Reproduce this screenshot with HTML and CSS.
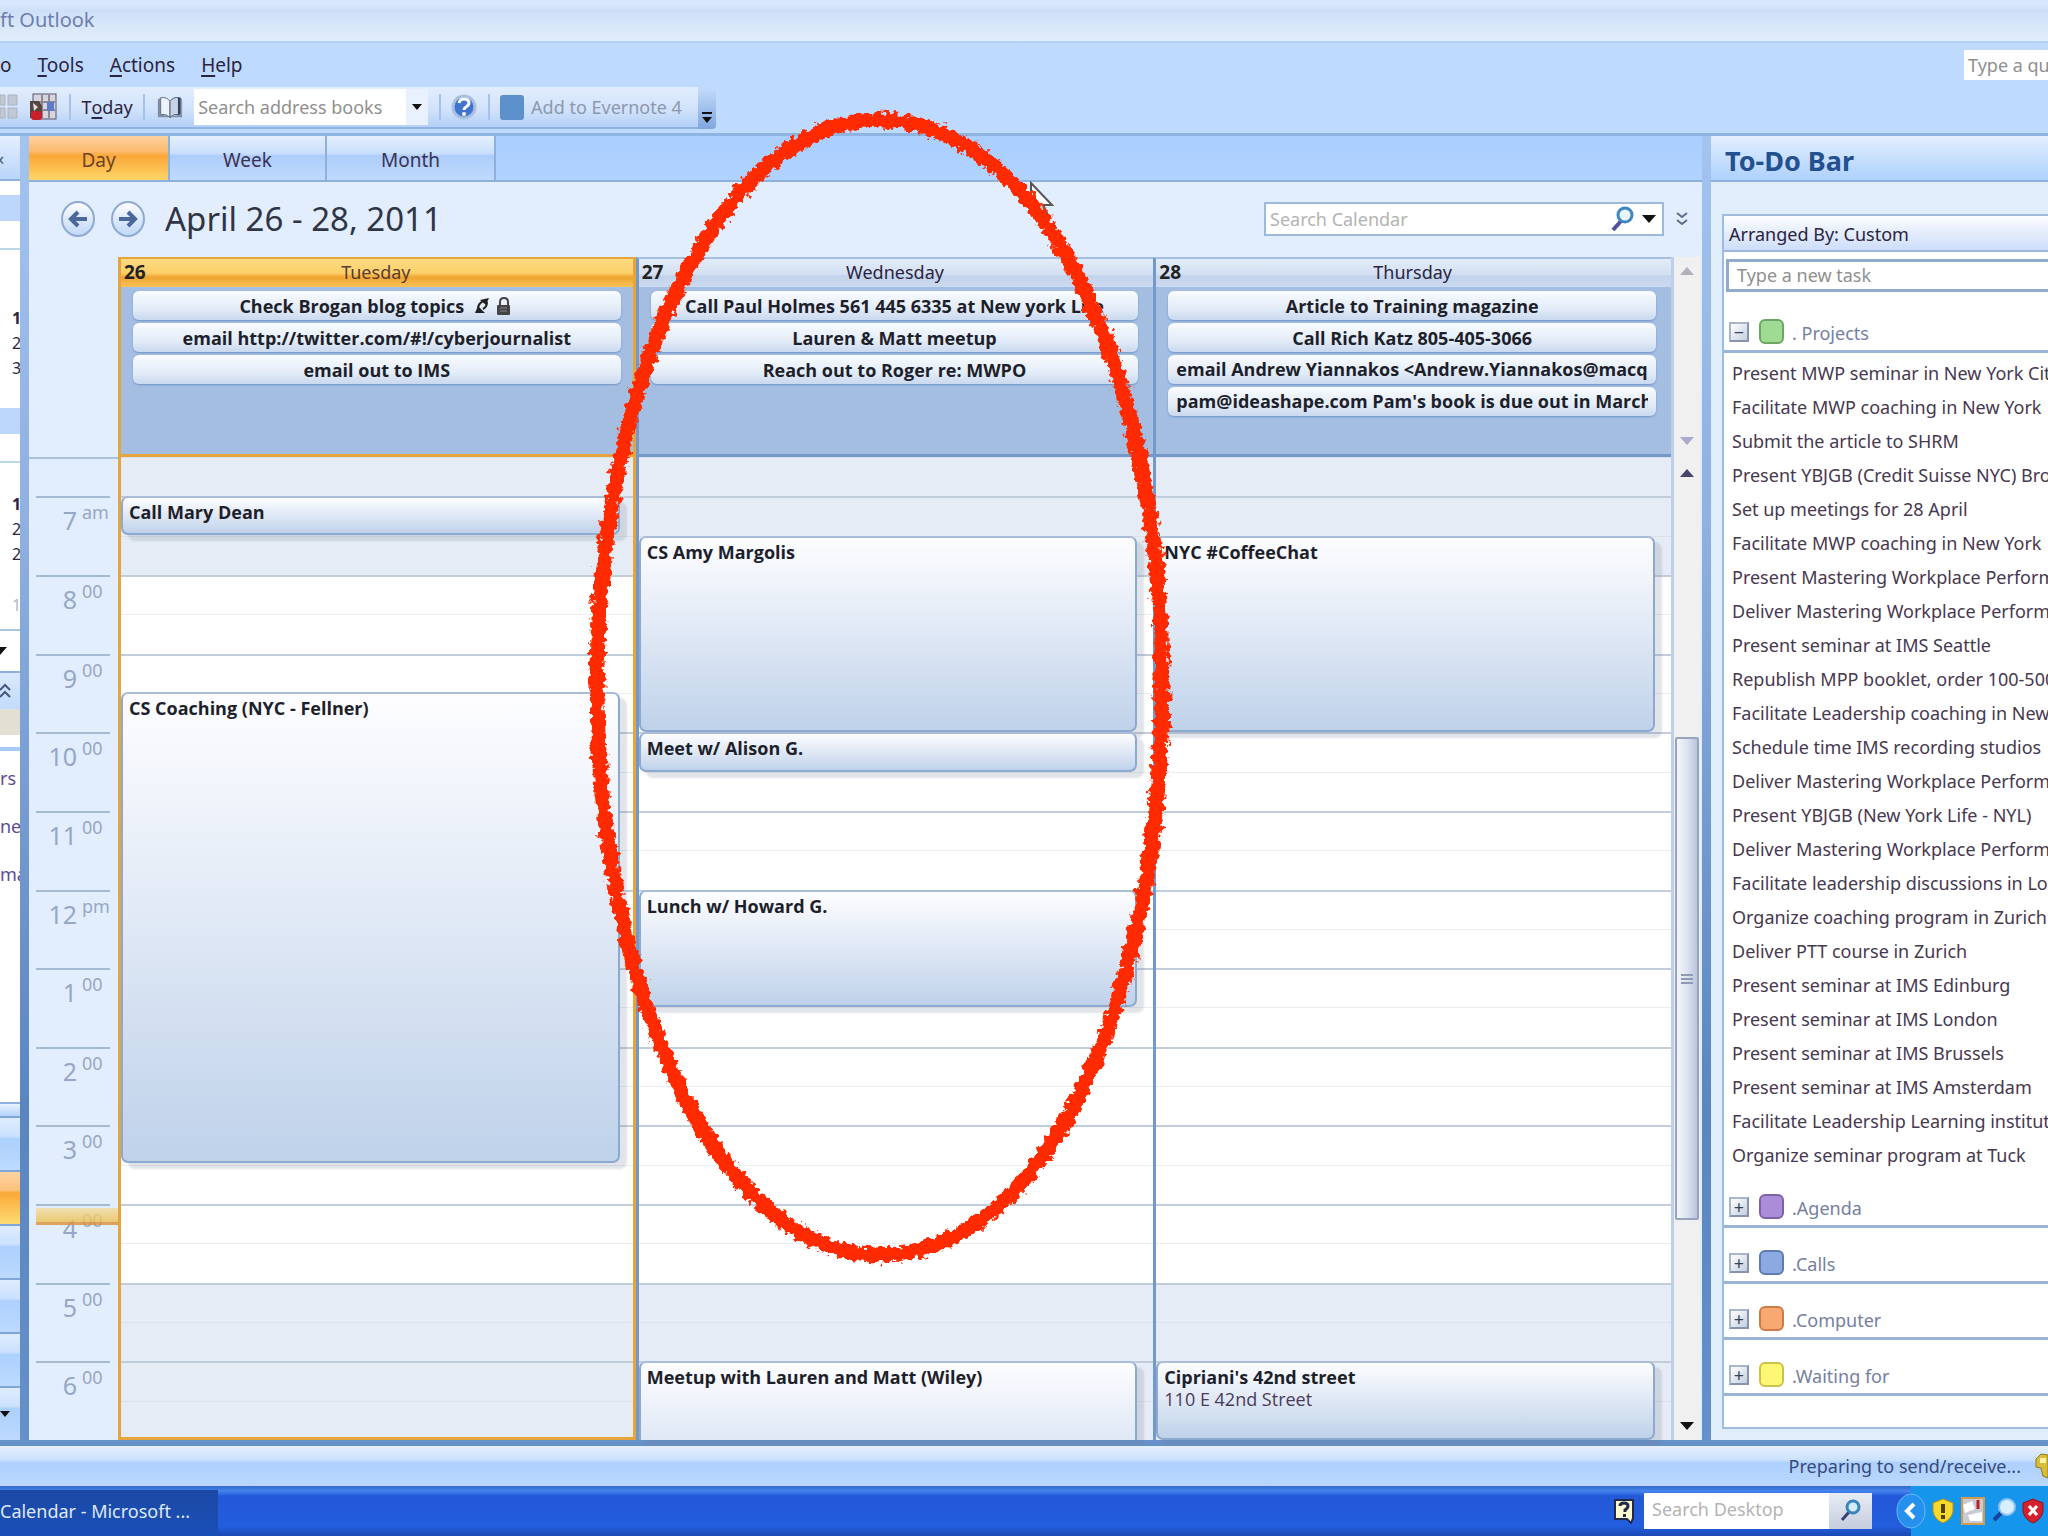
FILE: index.html
```
<!DOCTYPE html>
<html lang="en">
<head>
 <meta charset="UTF-8">
 <meta name="viewport" content="width=device-width, initial-scale=1">
 <title>Calendar - Microsoft Outlook</title>
 <link rel="stylesheet" href="styles.css">
</head>
<body>
 <header class="title-bar">ft Outlook</header>

 <nav class="menu-bar">
  <a href="#">o</a>
  <a href="#"><u>T</u>ools</a>
  <a href="#"><u>A</u>ctions</a>
  <a href="#"><u>H</u>elp</a>
  <input class="question-box" type="text" placeholder="Type a question for help" aria-label="Type a question">
 </nav>

 <div class="toolbar-row">
  <div class="toolbar">
   <button class="tool" aria-label="View">
    <svg width="18" height="30" viewBox="0 0 18 30"><path d="M0 3h5v10H0zM8 3h9v10H8zM0 16h5v10H0zM8 16h9v10H8z" fill="#c3c9d3" stroke="#a9b2c0"/></svg>
   </button>
   <button class="tool" aria-label="Address book">
    <svg width="30" height="30" viewBox="0 0 30 30"><rect x="5" y="2" width="23" height="25" fill="#d9d5dc" stroke="#55556e"/><path d="M14 3v23M21 3v23M6 10h21M6 18h21" stroke="#8d8898" stroke-width="2"/><rect x="19" y="10" width="7" height="9" fill="#5c7cc8"/><path d="M2 9h9l3 5v12H2z" fill="#55443f"/><path d="M5 11l5 4-4 4z" fill="#ddd"/><rect x="3" y="19" width="11" height="9" rx="3" fill="#c8202a"/></svg>
   </button>
   <span class="separator"></span>
   <button class="tool">T<u>o</u>day</button>
   <span class="separator"></span>
   <button class="tool" aria-label="Open address book">
    <svg width="28" height="28" viewBox="0 0 30 28"><path d="M2 6l3-2v18l9 2 2 2 2-2 9-2V4l1 2v19H2z" fill="#7d8da3"/><path d="M5 4q7-1 10 4v17q-4-4-10-3z" fill="#eef3fa" stroke="#5d6b80"/><path d="M15 8q3-5 10-4v18q-6-1-10 3z" fill="#c7d4e6" stroke="#46546b"/><path d="M25 4v18" stroke="#34425c" stroke-width="3"/></svg>
   </button>
   <div class="combo">
    <input type="text" placeholder="Search address books" aria-label="Search address books">
    <button aria-label="Show list"><span class="arrow-down small"></span></button>
   </div>
   <span class="separator"></span>
   <button class="tool" aria-label="Help">
    <svg width="26" height="28" viewBox="0 0 26 26"><circle cx="13" cy="13" r="11" fill="#3f74cf" stroke="#a9bfdf" stroke-width="3"/><path d="M8 9q1-4 5-4 5 0 5 4 0 2-3 4-2 1-2 3" fill="none" stroke="#fff" stroke-width="3"/><circle cx="13" cy="20" r="2" fill="#fff"/></svg>
   </button>
   <span class="separator"></span>
   <button class="tool evernote"><span class="evernote-icon"></span>Add to Evernote 4</button>
  </div>
  <button class="toolbar-more" aria-label="Toolbar options"><span class="more-bar"></span><span class="arrow-down small"></span></button>
 </div>

 <main class="workspace">
  <aside class="nav-pane">
   <div class="nav-head">«</div>
   <div class="mini-month">
    <div class="month-band"></div>
    <div class="month-days"><b>1</b><span>2</span><span>3</span></div>
   </div>
   <div class="mini-month second">
    <div class="month-band"></div>
    <div class="month-days"><b>1</b><span>2</span><span>2</span><i>1</i></div>
   </div>
   <div class="nav-drop"><span class="arrow-down"></span></div>
   <div class="nav-section">
    <svg width="12" height="16" viewBox="0 0 12 16"><path d="M0 7l5-5 5 5M0 14l5-5 5 5" fill="none" stroke="#44597f" stroke-width="2"/></svg>
   </div>
   <div class="nav-selected"></div>
   <div class="nav-links">
    <a href="#">rs</a>
    <a href="#">ne</a>
    <a href="#">ma</a>
   </div>
   <div class="nav-grip"></div>
   <button class="nav-button" aria-label="Mail"></button>
   <button class="nav-button active" aria-label="Calendar"></button>
   <button class="nav-button" aria-label="Contacts"></button>
   <button class="nav-button" aria-label="Tasks"></button>
   <button class="nav-button" aria-label="Notes"></button>
   <button class="nav-button" aria-label="Configure buttons"><span class="arrow-down small"></span></button>
  </aside>

  <section class="calendar">
   <div class="tabs">
    <button class="tab tab-day active">Day</button>
    <button class="tab tab-week">Week</button>
    <button class="tab tab-month">Month</button>
   </div>

   <div class="date-bar">
    <button class="round" aria-label="Back"><svg width="34" height="36" viewBox="0 0 34 36"><ellipse cx="17" cy="18" rx="16" ry="17" fill="url(#orb)" stroke="#8eaad2" stroke-width="2"/><path d="M26 18H10M17 11l-7 7 7 7" fill="none" stroke="#4a689c" stroke-width="4"/></svg></button>
    <button class="round" aria-label="Forward"><svg width="34" height="36" viewBox="0 0 34 36"><defs><linearGradient id="orb" x2="0" y2="1"><stop offset="0" stop-color="#fff"/><stop offset=".5" stop-color="#dce9fb"/><stop offset="1" stop-color="#c0d8f8"/></linearGradient></defs><ellipse cx="17" cy="18" rx="16" ry="17" fill="url(#orb)" stroke="#8eaad2" stroke-width="2"/><path d="M8 18h16M17 11l7 7-7 7" fill="none" stroke="#4a689c" stroke-width="4"/></svg></button>
    <h1>April 26 - 28, 2011</h1>
    <div class="search">
     <input type="text" placeholder="Search Calendar" aria-label="Search Calendar">
     <button aria-label="Search"><svg width="24" height="26" viewBox="0 0 24 26"><path d="M2 24l8-9" stroke="#51509c" stroke-width="4"/><circle cx="14" cy="9" r="7" fill="#e8f5fd" stroke="#3f86c0" stroke-width="3"/></svg></button>
     <button aria-label="Search options"><span class="arrow-down"></span></button>
    </div>
    <button class="expand" aria-label="Expand"><svg width="12" height="16" viewBox="0 0 12 16"><path d="M1 2l5 4 5-4M1 9l5 4 5-4" fill="none" stroke="#5d6f8c" stroke-width="2"/></svg></button>
   </div>

   <div class="week">
    <div class="day-head today first"><b>26</b><span>Tuesday</span></div>
    <div class="day-head"><b>27</b><span>Wednesday</span></div>
    <div class="day-head"><b>28</b><span>Thursday</span></div>

    <div class="all-day today first">
     <div class="pill">Check Brogan blog topics
      <svg width="42" height="20" viewBox="0 0 42 20"><path d="M3 17l3-7 7 7zM17 2l-3 7-6-5z" fill="#222"/><path d="M6 13q0-6 6-8M15 6q0 5-4 7" fill="none" stroke="#222" stroke-width="2"/><rect x="25" y="9" width="13" height="10" rx="1" fill="#444"/><path d="M28 9V6q0-4 4-4t4 4v3" fill="none" stroke="#444" stroke-width="2"/><path d="M28 12h7M28 15h7" stroke="#888"/></svg>
     </div>
     <div class="pill">email http://twitter.com/#!/cyberjournalist</div>
     <div class="pill">email out to IMS</div>
    </div>
    <div class="all-day">
     <div class="pill">Call Paul Holmes 561 445 6335 at New york Life</div>
     <div class="pill">Lauren &amp; Matt meetup</div>
     <div class="pill">Reach out to Roger re: MWPO</div>
    </div>
    <div class="all-day">
     <div class="pill">Article to Training magazine</div>
     <div class="pill">Call Rich Katz 805-405-3066</div>
     <div class="pill long"><span>email Andrew Yiannakos &lt;Andrew.Yiannakos@macq</span></div>
     <div class="pill long"><span>pam@ideashape.com Pam's book is due out in March</span></div>
    </div>
    <div class="scroll scroll-top"><span class="arrow-up faded"></span><span class="arrow-down faded"></span></div>

    <div class="hours">
     <div class="hour">7<sup>am</sup></div>
     <div class="hour">8<sup>00</sup></div>
     <div class="hour">9<sup>00</sup></div>
     <div class="hour">10<sup>00</sup></div>
     <div class="hour">11<sup>00</sup></div>
     <div class="hour">12<sup>pm</sup></div>
     <div class="hour">1<sup>00</sup></div>
     <div class="hour">2<sup>00</sup></div>
     <div class="hour">3<sup>00</sup></div>
     <div class="hour now">4<sup>00</sup></div>
     <div class="hour">5<sup>00</sup></div>
     <div class="hour">6<sup>00</sup></div>
    </div>
    <div class="slots" id="slots"></div>
    <div class="day today first">
     <div class="event at-700 half">Call Mary Dean</div>
     <div class="event at-930 six-hours">CS Coaching (NYC - Fellner)</div>
    </div>
    <div class="day">
     <div class="event at-730 long-block">CS Amy Margolis</div>
     <div class="event at-1000 half">Meet w/ Alison G.</div>
     <div class="event at-1200 hour-half">Lunch w/ Howard G.</div>
     <div class="event at-1800 cut">Meetup with Lauren and Matt (Wiley)</div>
    </div>
    <div class="day">
     <div class="event at-730 long-block">NYC #CoffeeChat</div>
     <div class="event at-1800 one-hour">Cipriani's 42nd street<span>110 E 42nd Street</span></div>
    </div>
    <div class="scroll scroll-main">
     <span class="arrow-up"></span>
     <div class="track"><div class="thumb"><i></i><i></i><i></i></div></div>
     <span class="arrow-down"></span>
    </div>
   </div>
  </section>

  <aside class="todo">
   <h2>To-Do Bar</h2>
   <div class="todo-box">
    <div class="arranged">Arranged By: Custom</div>
    <input class="new-task" type="text" placeholder="Type a new task" aria-label="Type a new task">
    <div class="group first"><button class="toggle" aria-label="Collapse">−</button><span class="swatch green"></span>. Projects</div>
    <ul class="tasks">
     <li>Present MWP seminar in New York City</li>
     <li>Facilitate MWP coaching in New York</li>
     <li>Submit the article to SHRM</li>
     <li>Present YBJGB (Credit Suisse NYC) Brown</li>
     <li>Set up meetings for 28 April</li>
     <li>Facilitate MWP coaching in New York</li>
     <li>Present Mastering Workplace Performance</li>
     <li>Deliver Mastering Workplace Performance</li>
     <li>Present seminar at IMS Seattle</li>
     <li>Republish MPP booklet, order 100-500</li>
     <li>Facilitate Leadership coaching in New York</li>
     <li>Schedule time IMS recording studios</li>
     <li>Deliver Mastering Workplace Performance</li>
     <li>Present YBJGB (New York Life - NYL)</li>
     <li>Deliver Mastering Workplace Performance</li>
     <li>Facilitate leadership discussions in London</li>
     <li>Organize coaching program in Zurich</li>
     <li>Deliver PTT course in Zurich</li>
     <li>Present seminar at IMS Edinburg</li>
     <li>Present seminar at IMS London</li>
     <li>Present seminar at IMS Brussels</li>
     <li>Present seminar at IMS Amsterdam</li>
     <li>Facilitate Leadership Learning institute</li>
     <li>Organize seminar program at Tuck</li>
    </ul>
    <div class="group"><button class="toggle" aria-label="Expand">+</button><span class="swatch purple"></span>.Agenda</div>
    <div class="group"><button class="toggle" aria-label="Expand">+</button><span class="swatch blue"></span>.Calls</div>
    <div class="group"><button class="toggle" aria-label="Expand">+</button><span class="swatch orange"></span>.Computer</div>
    <div class="group"><button class="toggle" aria-label="Expand">+</button><span class="swatch yellow"></span>.Waiting for</div>
   </div>
  </aside>
 </main>

 <footer class="status-bar">
  <span>Preparing to send/receive...</span>
  <svg width="13" height="26" viewBox="0 0 13 26"><path d="M13 2L6 1 1 6v8l5 1 2 8 5 2z" fill="#d8bd3a" stroke="#8c7a1d"/><path d="M5 5h6v5H5z" fill="#fff3a8"/></svg>
 </footer>

 <div class="taskbar">
  <button class="task-button">Calendar - Microsoft ...</button>
  <svg width="20" height="26" viewBox="0 0 20 26"><path d="M1 2h18v18l-2 5-4-4H1z" fill="#fdfbd0" stroke="#222a4a" stroke-width="2"/><path d="M6 8q0-3 4-3t4 3q0 2-3 4v2" fill="none" stroke="#222a4a" stroke-width="3"/><rect x="9" y="16" width="3" height="3" fill="#222a4a"/></svg>
  <div class="desk-search">
   <input type="text" placeholder="Search Desktop" aria-label="Search Desktop">
   <button aria-label="Search"><svg width="22" height="24" viewBox="0 0 22 24"><path d="M2 21l7-8" stroke="#37406f" stroke-width="3"/><circle cx="13" cy="8" r="6" fill="#d5ebfa" stroke="#3a84bd" stroke-width="3"/></svg></button>
  </div>
  <div class="tray">
   <svg width="30" height="38" viewBox="0 0 30 38"><ellipse cx="15" cy="19" rx="14" ry="17" fill="#2590ee" stroke="#6bb9f6"/><path d="M18 12l-7 7 7 7" fill="none" stroke="#fff" stroke-width="4"/></svg>
   <svg width="22" height="26" viewBox="0 0 22 26"><path d="M11 1l10 4v8q-1 8-10 12Q2 21 1 13V5z" fill="#f7d92c" stroke="#b78f10"/><path d="M11 6v9M11 17v4" stroke="#54430d" stroke-width="4"/></svg>
   <svg width="26" height="30" viewBox="0 0 26 30"><rect x="2" y="2" width="22" height="26" fill="#c8cbd3" stroke="#d59b4a" stroke-width="2"/><path d="M3 9l9-4 3 8-10 4zM8 19l14-3v9H10z" fill="#fff"/><path d="M18 4v9" stroke="#b22" stroke-width="3"/></svg>
   <svg width="24" height="28" viewBox="0 0 24 28"><path d="M2 23l8-8" stroke="#1b3f9d" stroke-width="4"/><circle cx="15" cy="10" r="8" fill="#d8efff" stroke="#8cc2ef" stroke-width="2"/></svg>
   <svg width="22" height="28" viewBox="0 0 22 28"><path d="M11 2l10 4v8q-1 8-10 12Q2 22 1 14V6z" fill="#d5202f" stroke="#8a1420"/><path d="M7 9l8 9M15 9l-8 9" stroke="#fff" stroke-width="3"/></svg>
  </div>
 </div>

 <svg class="cursor" width="28" height="42" viewBox="0 0 28 42"><path d="M2 2v30l6-6 6 13 6-3-6-12h9z" fill="#fff" stroke="#555" stroke-width="2"/></svg>

 <!-- Red marker ring around Wednesday -->
 <svg class="marker" width="620" height="1190" viewBox="0 0 620 1190">
  <filter id="rough" x="-5%" y="-5%" width="110%" height="110%">
   <feTurbulence type="fractalNoise" baseFrequency="0.16" numOctaves="3" seed="4"/>
   <feDisplacementMap in="SourceGraphic" scale="12" xChannelSelector="R" yChannelSelector="G"/>
  </filter>
  <path d="M304 25C460 25 587 260 587 592C587 905 470 1160 304 1160C148 1160 22 903 22 590C22 277 148 25 304 25Z" fill="none" stroke="#ff2a00" stroke-width="15" filter="url(#rough)"/>
 </svg>

 <script>
  // Half-hour rows from 6:30 am to 7 pm, working hours are 8 to 5
  const slots = document.getElementById('slots');
  for (let i = 0; i < 25; i++) {
   const time = 6.5 + i / 2;
   const slot = document.createElement('div');
   slot.className = 'slot';
   if (time >= 8 && time < 17) slot.classList.add('working');
   if (i % 2 === 1) slot.classList.add('on-hour');
   slots.appendChild(slot);
  }
 </script>
</body>
</html>
```
FILE: styles.css
```
:root {
 --line: #8fb0dc;
 --edge: #7398c9;
 --pale: #e2eefd;
 --bar: #bfdaff;
 --orange: #e5a53c;
}

* {
 box-sizing: border-box;
}

body {
 margin: 0;
 min-height: 100vh;
 display: flex;
 flex-direction: column;
 position: relative;
 overflow: hidden;
 background: var(--bar);
 color: #2b2440;
 font-family: "Noto Sans", "Open Sans", sans-serif;
 font-size: 18px;
 line-height: 24px;
}

button,
input {
 font: inherit;
 color: inherit;
 border: 0;
 padding: 0;
 background: none;
 border-radius: 0;
 min-width: 0;
}

input::placeholder {
 color: #8f8f8f;
 opacity: 1;
}

a {
 color: inherit;
 text-decoration: none;
}

u {
 text-decoration-thickness: 2px;
 text-underline-offset: 3px;
}

svg {
 display: block;
 flex: none;
}

.arrow-down,
.arrow-up {
 display: block;
 border: 7px solid transparent;
 border-top: 8px solid #111;
 border-bottom: 0;
}

.arrow-up {
 border-top: 0;
 border-bottom: 8px solid #44466e;
}

.small {
 width: 10px;
 border-width: 6px 5px 0;
}

.arrow-down.faded {
 border-top-color: #a9a9cc;
}

.arrow-up.faded {
 border-bottom-color: #b0b0bc;
}

/* Title, menu and toolbar */
.title-bar {
 height: 41px;
 line-height: 40px;
 font-size: 20px;
 color: #6d7fae;
 background: linear-gradient(#d8e7fc 0 6px, #cddff8 10px, #e3eefb);
}

.menu-bar {
 height: 46px;
 display: flex;
 align-items: center;
 gap: 26px;
 font-size: 19px;
 border-top: 2px solid #b4d0f5;
}

.question-box {
 width: 84px;
 height: 30px;
 margin-left: auto;
 padding-left: 4px;
 font-size: 18px;
 background: #fff;
}

.toolbar-row {
 display: flex;
 height: 46px;
 padding-bottom: 4px;
}

.toolbar {
 width: 698px;
 display: flex;
 align-items: center;
 justify-content: space-between;
 padding-right: 16px;
 background: linear-gradient(#e2edfd, #cfe1fb 60%, #b3d0f6);
 border-bottom: 2px solid #8fb2e2;
}

.tool {
 display: flex;
 align-items: center;
}

.separator {
 width: 2px;
 height: 26px;
 background: #a5c3ea;
}

.combo {
 display: flex;
 height: 36px;
 width: 234px;
}

.combo input {
 flex: 1;
 padding-left: 4px;
 background: #fff;
}

.combo button {
 width: 22px;
 display: grid;
 place-items: center;
 background: #e8f1fd;
}

.evernote {
 gap: 7px;
 color: #8c98ad;
}

.evernote-icon {
 width: 24px;
 height: 25px;
 border-radius: 3px;
 background: #5c90ca;
}

.toolbar-more {
 width: 18px;
 display: flex;
 flex-direction: column;
 align-items: center;
 justify-content: flex-end;
 gap: 3px;
 padding-bottom: 6px;
 background: linear-gradient(#c3dbfb, #7fa7df);
 border-radius: 0 4px 4px 0;
}

.more-bar {
 width: 10px;
 height: 2px;
 background: #111;
}

/* Main area */
.workspace {
 flex: 1;
 display: grid;
 grid-template-columns: 20px minmax(0, 1fr) 337px;
 column-gap: 9px;
 border-top: 3px solid #8fb4e2;
 border-bottom: 6px solid #6590c9;
 background: linear-gradient(#a3c4ef, #8fb0e0 30%, #5a85bf 75%, #6590c9);
}

.nav-pane {
 display: flex;
 flex-direction: column;
 overflow: hidden;
 background: #fff;
}

.nav-head {
 height: 45px;
 line-height: 44px;
 text-indent: -5px;
 color: #47597c;
 background: linear-gradient(#e4effe, #b9d5fb);
 border-bottom: 2px solid var(--line);
 margin-bottom: 14px;
}

.mini-month {
 height: 213px;
}

.mini-month.second {
 height: 223px;
 border-bottom: 2px solid #a9c6dc;
}

.month-band {
 height: 26px;
 background: #bdd7fb;
}

.month-days {
 margin-top: 27px;
 padding: 56px 0 0 12px;
 border-top: 2px solid #bcd8e8;
 display: flex;
 flex-direction: column;
 font-size: 16px;
 line-height: 25px;
}

.second .month-days {
 padding-top: 29px;
}

.month-days i {
 padding-top: 26px;
 font-style: normal;
 color: #b8b8b8;
}

.nav-drop {
 height: 40px;
 padding-top: 16px;
}

.nav-drop .arrow-down {
 width: 14px;
 margin-left: -7px;
}

.nav-section {
 height: 38px;
 padding-top: 10px;
 background: linear-gradient(#d9e9fe, #c2dbfb);
 border-top: 2px solid var(--line);
}

.nav-selected {
 height: 26px;
 margin-bottom: 12px;
 background: #e3dfd3;
}

.nav-links {
 flex: 1;
 display: flex;
 flex-direction: column;
 gap: 24px;
 padding-top: 15px;
 border-top: 4px solid #a6cbf8;
 color: #5b4c92;
}

.nav-grip {
 height: 14px;
 background: linear-gradient(#eaf3fe, #b4d2fa);
 border-top: 2px solid var(--line);
}

.nav-button {
 height: 54px;
 border-top: 2px solid #7fa6d8;
 background: linear-gradient(#dfecfe, #cbe1fe 35%, #add0fd 40%, #bddafe);
}

.nav-button.active {
 background: linear-gradient(#fdd3a2, #fcc07b 35%, #fba938 40%, #fedb72);
}

/* Calendar */
.calendar {
 display: flex;
 flex-direction: column;
 background: var(--pale);
}

.tabs {
 display: flex;
 height: 46px;
 background: linear-gradient(#aacffe, #b0d2ff);
 border-bottom: 2px solid var(--line);
}

.tab {
 padding-top: 4px;
 font-size: 19px;
 color: #3c3154;
 border-right: 2px solid var(--line);
 background: linear-gradient(#e4effd, #c9defc 40%, #adcdfa 45%, #c0dafd);
}

.tab.active {
 background: linear-gradient(#fdd1a0, #fdba6c 35%, #fba737 45%, #fed567);
 color: #6b4426;
}

.tab-day {
 width: 141px;
}

.tab-week {
 width: 157px;
}

.tab-month {
 width: 169px;
}

.date-bar {
 height: 75px;
 display: flex;
 align-items: center;
 padding: 0 14px 2px 32px;
}

.round {
 margin-right: 16px;
}

h1 {
 margin: 0 auto 0 4px;
 font-size: 33px;
 line-height: 40px;
 font-weight: 400;
 color: #303545;
}

.search {
 display: flex;
 width: 400px;
 height: 34px;
 background: #fff;
 border: 2px solid #9db9dc;
}

.search input {
 flex: 1;
 padding-left: 4px;
}

.search input::placeholder,
.desk-search input::placeholder {
 color: #b3b3b3;
}

.search button {
 width: 26px;
 display: grid;
 place-items: center;
}

.expand {
 margin-left: 12px;
}

.week {
 flex: 1;
 display: grid;
 grid-template-columns: 89px repeat(3, minmax(0, 1fr)) 31px;
 grid-template-rows: 30px 170px minmax(0, 1fr);
}

.first {
 grid-column: 2;
}

.day-head {
 display: flex;
 align-items: center;
 padding: 0 5px 2px 3px;
 border-top: 2px solid #a5bfe4;
 border-left: 3px solid var(--edge);
 background: linear-gradient(#e2ecf9, #d3e0f3 55%, #c3d3ec 60%, #cbdaf1);
}

.day-head b {
 width: 30px;
 font-size: 19px;
 color: #222;
}

.day-head span {
 flex: 1;
 padding-right: 30px;
 text-align: center;
}

.day-head.today {
 border: 3px solid var(--orange);
 border-top-width: 2px;
 border-bottom: 0;
 background: linear-gradient(#fddb82, #fbd069 50%, #f0a42f 65%, #f8c258);
 color: #5b3a33;
}

.all-day {
 display: flex;
 flex-direction: column;
 gap: 3px;
 padding: 4px 15px 0 12px;
 background: #a4bee2;
 border-left: 3px solid var(--edge);
 border-bottom: 3px solid var(--edge);
}

.all-day.today {
 border: 3px solid var(--orange);
 border-top: 0;
 padding-right: 12px;
}

.pill {
 height: 29px;
 display: flex;
 justify-content: center;
 align-items: center;
 gap: 8px;
 padding: 0 8px;
 white-space: nowrap;
 font-family: "Open Sans", sans-serif;
 font-weight: 700;
 color: #1d1f2b;
 border-radius: 6px;
 background: linear-gradient(#f9fbfe, #e3ecf8 60%, #cad9ef);
 box-shadow: 0 1px 2px #6f93c7;
}

.pill.long {
 display: block;
 line-height: 28px;
}

.pill.long span {
 display: block;
 overflow: hidden;
}

.slots,
.hours,
.day,
.scroll-main {
 grid-row: 3;
}

.slots {
 grid-column: 2 / 5;
 display: grid;
 grid-template-rows: repeat(25, minmax(0, 1fr));
}

.slot {
 background: #e6ecf6;
 border-top: 1px solid #dbe1ec;
}

.slot.working {
 background: #fff;
 border-top-color: #ebeeef;
}

.slot.on-hour {
 border-top: 2px solid #c2cddb;
}

.hours {
 grid-column: 1;
 display: grid;
 grid-template-rows: minmax(0, 1fr) repeat(12, minmax(0, 2fr));
 padding: 0 8px 0 7px;
 box-shadow: inset 0 2px #a9c3df;
}

/* Empty half hour before 7 am */
.hours::before {
 content: "";
}

.hour {
 position: relative;
 display: grid;
 grid-template-columns: 41px 1fr;
 column-gap: 5px;
 align-content: start;
 text-align: right;
 border-top: 2px solid #a5bad3;
 font-size: 25px;
 line-height: 44px;
 color: #96a7c6;
}

.hour sup {
 font-size: 18px;
 line-height: 28px;
 text-align: left;
}

/* Current time line over the hour label */
.now::before {
 content: "";
 position: absolute;
 top: 2px;
 left: 0;
 right: -8px;
 height: 14px;
 background: linear-gradient(#f3dca0, #edc14f);
 border-bottom: 3px solid #dd9035;
 opacity: .8;
}

.day {
 display: grid;
 grid-template-rows: repeat(25, minmax(0, 1fr));
 padding-right: 16px;
 border-left: 3px solid var(--edge);
}

.day.today {
 border: 3px solid var(--orange);
 border-top: 0;
 padding-right: 13px;
}

.day.first {
 grid-column: 2;
}

.day.first + .day {
 grid-column: 3;
}

.day.first + .day + .day {
 grid-column: 4;
}

.event {
 padding: 2px 6px;
 font-family: "Open Sans", sans-serif;
 font-weight: 700;
 color: #1d1f2b;
 border: 2px solid #8ca9d0;
 border-top-color: #a9bcd8;
 border-radius: 7px;
 background: linear-gradient(#fdfdff, #e2eaf6 45%, #bfd2ea);
 box-shadow: 7px 6px 2px rgba(120, 130, 150, .22);
}

.event span {
 display: block;
 line-height: 20px;
 font-weight: 400;
 color: #4a3a5c;
}

.at-700 { grid-row-start: 2; }
.at-730 { grid-row-start: 3; }
.at-930 { grid-row-start: 7; }
.at-1000 { grid-row-start: 8; }
.at-1200 { grid-row-start: 12; }
.at-1800 { grid-row-start: 24; }

.half { grid-row-end: span 1; }
.one-hour { grid-row-end: span 2; }
.hour-half { grid-row-end: span 3; }
.long-block { grid-row-end: span 5; }
.six-hours { grid-row-end: span 12; }

.cut {
 grid-row-end: span 2;
 border-bottom: 0;
 border-radius: 7px 7px 0 0;
 background: linear-gradient(#fdfdff, #dfe8f5);
}

.scroll {
 grid-column: 5;
 display: flex;
 flex-direction: column;
 align-items: center;
 justify-content: space-between;
 margin-right: 2px;
 border-left: 3px solid #bcd0ec;
 background: #f0f0f1;
}

.scroll-top {
 grid-row: 1 / 3;
 padding: 10px 0 12px;
}

.scroll-main {
 padding: 12px 0 10px;
}

.track {
 flex: 1;
 display: flex;
 flex-direction: column;
 padding: 260px 0 202px;
}

.thumb {
 flex: 1;
 width: 24px;
 display: flex;
 flex-direction: column;
 align-items: center;
 justify-content: center;
 gap: 2px;
 border: 2px solid #98a4bd;
 border-radius: 2px;
 background: linear-gradient(90deg, #f4f6fa, #dde3ee 50%, #b9c5dd);
}

.thumb i {
 width: 12px;
 height: 2px;
 background: #8f9bb5;
}

/* To-Do bar */
.todo {
 display: flex;
 flex-direction: column;
 overflow: hidden;
 background: #e0eefc;
 white-space: nowrap;
}

h2 {
 height: 46px;
 margin: 0 0 32px;
 padding-left: 14px;
 font-size: 27px;
 line-height: 50px;
 font-weight: 700;
 color: #23508f;
 background: linear-gradient(#e4effe, #aed1fe);
 border-bottom: 2px solid var(--line);
}

.todo-box {
 flex: 1;
 display: flex;
 flex-direction: column;
 margin: 0 0 11px 11px;
 background: #fff;
 border: 2px solid #9fbbe0;
 border-right: 0;
}

.arranged {
 height: 36px;
 padding-left: 5px;
 line-height: 36px;
 background: linear-gradient(#fcfdff, #cdddfa);
 border-bottom: 2px solid #9db7dc;
}

.new-task {
 height: 33px;
 margin: 7px 0 0 2px;
 padding: 0 0 2px 8px;
 border: 3px solid #90abcb;
 border-right: 0;
}

.group {
 height: 56px;
 display: flex;
 align-items: flex-end;
 padding: 0 0 5px 5px;
 border-bottom: 3px solid #98b5d8;
 color: #75809f;
}

.group.first {
 height: 61px;
}

.toggle {
 width: 20px;
 height: 20px;
 margin: 0 10px 3px 0;
 line-height: 12px;
 color: #34435f;
 border: 2px solid #a9b5c9;
 border-right-color: #8694ae;
 border-bottom-color: #8694ae;
 background: linear-gradient(135deg, #fff, #c5cfdd);
}

.swatch {
 width: 25px;
 height: 25px;
 margin: 0 8px 1px 0;
 border: 2px solid;
 border-radius: 6px;
}

.green { background: #9fdb92; border-color: #6da563; }
.purple { background: #ab8cd9; border-color: #7d62a8; }
.blue { background: #8ca9e2; border-color: #5f7bb2; }
.orange { background: #f8a871; border-color: #cd7b48; }
.yellow { background: #fcf873; border-color: #cbc14b; }

.tasks {
 margin: 0 0 0 8px;
 padding: 3px 0 0;
 list-style: none;
 line-height: 34px;
 color: #46384f;
}

/* Status bar and taskbar */
.status-bar {
 height: 40px;
 display: flex;
 align-items: center;
 justify-content: flex-end;
 gap: 14px;
 color: #364a7c;
 background: linear-gradient(#e6effd, #cbe1fd 35%, #aed0fe 42%, #bbd7fe);
}

.taskbar {
 height: 50px;
 display: flex;
 align-items: center;
 background: linear-gradient(#2f69c8, #4585ee 5px, #2358d8 10px, #235edf 80%, #1b49b4);
}

.task-button {
 width: 218px;
 height: 46px;
 margin: 4px auto 0 0;
 padding-bottom: 4px;
 text-align: left;
 color: #dfe9fb;
 background: linear-gradient(#1a48a4, #1b4fb8);
}

.desk-search {
 width: 228px;
 height: 36px;
 display: flex;
 margin: 0 24px 0 10px;
 background: #fff;
}

.desk-search input {
 flex: 1;
 padding: 0 0 4px 8px;
}

.desk-search button {
 width: 43px;
 display: grid;
 place-items: center;
 background: linear-gradient(#e8ecf4, #c4cddd);
}

.tray {
 align-self: stretch;
 width: 152px;
 display: flex;
 align-items: center;
 justify-content: space-between;
 padding-right: 4px;
 background: linear-gradient(90deg, transparent 15px, #1596ec 15px);
}

/* Pointer and marker lie over the window */
.cursor {
 position: absolute;
 left: 1029px;
 top: 181px;
}

.marker {
 position: absolute;
 left: 575px;
 top: 95px;
 pointer-events: none;
}
```
